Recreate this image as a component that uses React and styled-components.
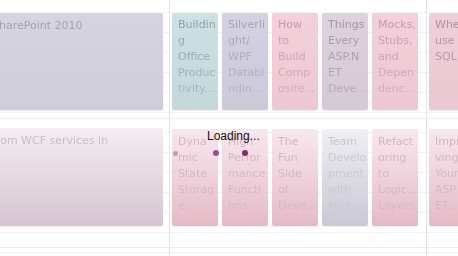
import React from "react";
import styled, { createGlobalStyle } from "styled-components";

const Global = createGlobalStyle`
  html, body { margin: 0; padding: 0; background: #ffffff; overflow: hidden; }
  body { width: 458px; height: 256px; }
`;

const Board = styled.div`
  position: relative;
  margin-left: -14px;
  width: 480px;
  height: 256px;
  display: flex;
  flex-direction: column;
  font-family: "DejaVu Sans", Verdana, sans-serif;
  font-size: 11px;
  background: repeating-linear-gradient(
    180deg,
    transparent 0,
    transparent 12px,
    #f3f3f4 12px,
    #f3f3f4 13px,
    transparent 13px,
    transparent 20px
  );
`;

const Row = styled.div`
  display: grid;
  grid-template-columns: 184px 257px 1fr;
  height: ${(p) => p.$h}px;
  flex: ${(p) => (p.$fill ? "1" : "none")};
  border-bottom: ${(p) => (p.$fill ? "none" : "1px solid #ececee")};
  box-sizing: border-box;
`;

const Cell = styled.div`
  display: flex;
  gap: 4px;
  align-items: flex-start;
  padding: ${(p) => p.$pt}px 0 0 ${(p) => p.$pl}px;
  border-right: ${(p) => (p.$sep ? "1px solid #e3e3e6" : "none")};
  box-sizing: border-box;
  overflow: hidden;
  min-width: 0;
`;

const Card = styled.div`
  flex: none;
  width: ${(p) => p.$w}px;
  height: ${(p) => p.$hh}px;
  box-sizing: border-box;
  padding: ${(p) => p.$pad}px 0 0 6px;
  border-radius: 2px;
  background: linear-gradient(180deg, ${(p) => p.$top}, ${(p) => p.$bottom});
  box-shadow: 0 1px 1px rgba(120, 110, 130, 0.12);
  overflow: hidden;
`;

const Text = styled.div`
  color: ${(p) => p.$color};
  line-height: 16px;
  -webkit-mask-image: linear-gradient(180deg, #000 0%, rgba(0, 0, 0, ${(p) => p.$fade}) 100%);
  mask-image: linear-gradient(180deg, #000 0%, rgba(0, 0, 0, ${(p) => p.$fade}) 100%);
`;

const Line = styled.div`
  white-space: nowrap;
  overflow: hidden;
`;

const Loading = styled.div`
  position: absolute;
  left: 221px;
  top: 129px;
  font-family: "Segoe UI", "Liberation Sans", Arial, sans-serif;
  font-size: 12px;
  line-height: 15px;
  color: #111;
`;

const Dot = styled.span`
  position: absolute;
  left: ${(p) => p.$x}px;
  top: ${(p) => p.$y}px;
  width: ${(p) => p.$s}px;
  height: ${(p) => p.$s}px;
  border-radius: 50%;
  background: ${(p) => p.$c};
`;

const top = {
  wide: { top: "#d6d4e1", bottom: "#cfcddb", color: "#a3a1b4" },
  teal: { top: "#cde0e3", bottom: "#c4d7db", color: "#8fa0a5" },
  lav: { top: "#d4d2e0", bottom: "#cccad9", color: "#a5a2b6" },
  pink: { top: "#f3d0da", bottom: "#ecc8d2", color: "#c29ba8" },
  mauve: { top: "#dfd2df", bottom: "#d6c9d7", color: "#a393a4" },
  pink2: { top: "#f0cfd9", bottom: "#eac8d2", color: "#a6939f" },
};

const bot = {
  wide: { top: "#f4edf3", bottom: "#d6c4d0", color: "#cbbcc8" },
  pink: { top: "#f8e8ee", bottom: "#e5bac6", color: "#d4b3be" },
  lav: { top: "#f0eff4", bottom: "#c9c8d5", color: "#c6c6d3" },
};

const row1 = [
  { c: top.teal, lines: ["Buildin", "g", "Office", "Produc", "tivity..."] },
  { c: top.lav, lines: ["Silverli", "ght/", "WPF", "Databi", "ndin..."] },
  { c: top.pink, lines: ["How", "to", "Build", "Comp", "osite..."] },
  { c: top.mauve, lines: ["Things", "Every", "ASP.N", "ET", "Deve..."] },
  { c: top.pink, lines: ["Mocks,", "Stubs,", "and", "Depen", "denc..."] },
];

const row2 = [
  { c: bot.pink, lines: ["Dyna", "mic", "State", "Storag", "e..."] },
  { c: bot.pink, lines: ["High", "Perfor", "mance", "Functi", "ons"] },
  { c: bot.pink, lines: ["The", "Fun", "Side", "of", "Deve..."] },
  { c: bot.lav, lines: ["Team", "Develo", "pment", "with", "Micr..."] },
  { c: bot.pink, lines: ["Refact", "oring", "to", "Logic...", "Layers"] },
];

function Session({ c, lines, w = 46, h, fade, pad = 4 }) {
  return (
    <Card $w={w} $hh={h} $pad={pad} $top={c.top} $bottom={c.bottom}>
      <Text $color={c.color} $fade={fade}>
        {lines.map((l, i) => (
          <Line key={i}>{l}</Line>
        ))}
      </Text>
    </Card>
  );
}

export default function App() {
  return (
    <>
      <Global />
      <Board>
        <Row $h={119}>
          <Cell $sep $pt={13} $pl={0}>
            <Session c={top.wide} w={177} h={97} pad={5} fade={1} lines={["SharePoint 2010"]} />
          </Cell>
          <Cell $sep $pt={13} $pl={2}>
            {row1.map((s, i) => (
              <Session key={i} {...s} h={97} fade={0.55} />
            ))}
          </Cell>
          <Cell $pt={13} $pl={2}>
            <Session c={top.pink2} h={97} fade={0.8} lines={["When", "use", "SQL"]} />
          </Cell>
        </Row>
        <Row $h={129}>
          <Cell $sep $pt={9} $pl={0}>
            <Session c={bot.wide} w={177} h={98} pad={5} fade={1} lines={["from WCF services in"]} />
          </Cell>
          <Cell $sep $pt={10} $pl={2}>
            {row2.map((s, i) => (
              <Session key={i} {...s} h={97} pad={5} fade={0.75} />
            ))}
          </Cell>
          <Cell $pt={10} $pl={2}>
            <Session c={bot.pink} h={97} pad={5} fade={0.75} lines={["Impro", "ving", "Your", "ASP.N", "ET..."]} />
          </Cell>
        </Row>
        <Row $fill>
          <Cell $sep $pt={0} $pl={0} />
          <Cell $sep $pt={0} $pl={0} />
          <Cell $pt={0} $pl={0} />
        </Row>
        <Loading>Loading...</Loading>
        <Dot $x={187} $y={151} $s={5} $c="#c99bbb" />
        <Dot $x={227} $y={150} $s={6} $c="#9c4d88" />
        <Dot $x={256} $y={150} $s={6} $c="#7e2c6c" />
      </Board>
    </>
  );
}
